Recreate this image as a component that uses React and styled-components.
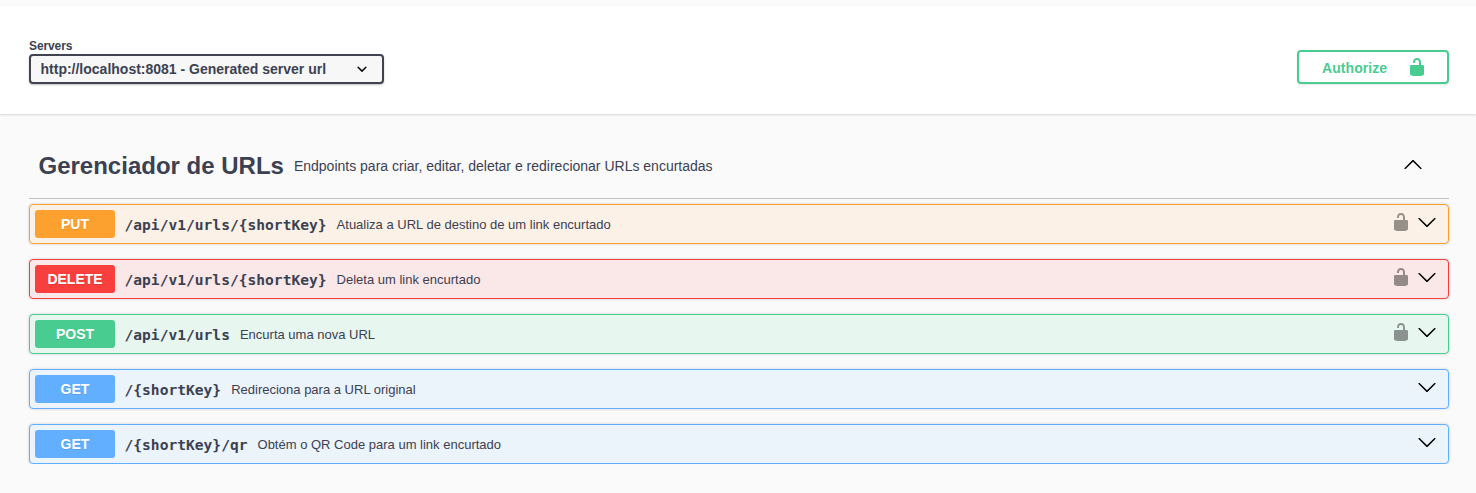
import React from 'react';
import styled, { createGlobalStyle } from 'styled-components';

const GlobalStyle = createGlobalStyle`
  *, *::before, *::after { box-sizing: border-box; }
  body {
    margin: 0;
    background: #fafafa;
    color: #3b4151;
    font-family: "Liberation Sans", Arial, sans-serif;
    overflow: hidden;
  }
`;

const Page = styled.div`
  padding-top: 6px;
`;

const SchemeContainer = styled.section`
  display: flex;
  justify-content: space-between;
  align-items: flex-start;
  height: 108px;
  padding: 32px 27px 0 29px;
  background: #fff;
  box-shadow: 0 1px 2px rgba(0, 0, 0, 0.15);
`;

const ServersLabel = styled.label`
  display: flex;
  flex-direction: column;
  font-size: 12px;
  font-weight: 700;
  line-height: 16px;
`;

const LabelText = styled.span`
  letter-spacing: -0.1px;
`;

const ServerSelect = styled.div`
  display: flex;
  align-items: center;
  justify-content: space-between;
  width: 355px;
  height: 30px;
  padding: 0 10px 0 9.5px;
  border: 2px solid #41444e;
  border-radius: 4px;
  background: #f7f7f7;
  box-shadow: 0 1px 2px rgba(0, 0, 0, 0.25);
  font-size: 14px;
`;

const AuthorizeButton = styled.button`
  display: flex;
  align-items: center;
  justify-content: space-between;
  width: 152px;
  height: 34px;
  margin-top: 12px;
  padding: 0 20px 0 23px;
  border: 2px solid #49cc90;
  border-radius: 4px;
  background: transparent;
  box-shadow: 0 1px 2px rgba(0, 0, 0, 0.1);
  color: #49cc90;
  font: 700 14px "Liberation Sans", Arial, sans-serif;
  letter-spacing: 0.07px;
`;

const ButtonText = styled.span`
  padding-top: 2px;
`;

const Icon = styled.svg`
  display: block;
  flex: none;
  width: 20px;
  height: 20px;
  fill: ${(p) => p.$fill || '#000'};
  opacity: ${(p) => p.$opacity || 1};
`;

const Section = styled.main`
  padding: 18px 27px 0 29px;
`;

const TagHeader = styled.header`
  display: flex;
  align-items: center;
  height: 67px;
  padding: 0 26px 0 9.5px;
  border-bottom: 1px solid rgba(59, 65, 81, 0.3);
`;

const TagTitle = styled.h3`
  margin: 0;
  padding-top: 2px;
  font-size: 24px;
  line-height: 28px;
  white-space: nowrap;
`;

const TagDescription = styled.small`
  flex: 1;
  padding: 2px 0 0 10px;
  font-size: 14px;
`;

const HeaderArrow = styled.span`
  padding-bottom: 3px;
`;

const Operations = styled.div`
  display: flex;
  flex-direction: column;
  gap: 15px;
  padding-top: 5px;
`;

const Operation = styled.div`
  display: flex;
  align-items: center;
  height: 40px;
  padding: 0 11px 0 5px;
  border: 1px solid ${(p) => p.$color};
  border-radius: 4px;
  background: ${(p) => p.$tint};
  box-shadow: 0 0 3px rgba(0, 0, 0, 0.19);
`;

const Method = styled.span`
  width: 80px;
  height: 28px;
  border-radius: 3px;
  background: ${(p) => p.$color};
  color: #fff;
  font-size: 14px;
  font-weight: 700;
  line-height: 28px;
  text-align: center;
  text-shadow: 0 1px 0 rgba(0, 0, 0, 0.1);
`;

const Path = styled.span`
  padding: 0 10px 0 9.5px;
  font-family: "DejaVu Sans Mono", monospace;
  font-size: 14.6px;
  font-weight: 700;
  white-space: nowrap;
`;

const Summary = styled.span`
  flex: 1;
  font-size: 13px;
`;

const Controls = styled.div`
  display: flex;
  gap: 6px;
  padding-bottom: 4px;
`;

const UnlockedIcon = (props) => (
  <Icon viewBox="0 0 20 20" {...props}>
    <path d="M15.8 8H14V5.6C14 2.703 12.665 1 10 1 7.334 1 6 2.703 6 5.6V6h2v-.801C8 3.754 8.797 3 10 3c1.203 0 2 .754 2 2.199V8H4c-.553 0-1 .646-1 1.199V17c0 .549.428 1.139.951 1.307l1.197.387C5.672 18.861 6.55 19 7.1 19h5.8c.549 0 1.428-.139 1.951-.307l1.196-.387c.524-.167.953-.757.953-1.306V9.199C17 8.646 16.352 8 15.8 8z" />
  </Icon>
);

const ArrowDown = () => (
  <Icon viewBox="0 0 20 20">
    <path d="M17.418 6.109c.272-.268.709-.268.979 0s.271.701 0 .969l-7.908 7.83c-.27.268-.707.268-.979 0l-7.908-7.83c-.27-.268-.27-.701 0-.969.271-.268.709-.268.979 0L10 13.25l7.418-7.141z" />
  </Icon>
);

const ArrowUp = () => (
  <Icon viewBox="0 0 20 20">
    <path d="M17.418 14.908c.272.268.709.268.979 0s.271-.701 0-.969l-7.908-7.83c-.27-.268-.707-.268-.979 0l-7.908 7.83c-.27.268-.27.701 0 .969.271.268.709.268.979 0L10 7.767l7.418 7.141z" />
  </Icon>
);

const SelectArrow = () => (
  <Icon viewBox="0 0 20 20">
    <path d="M13.418 7.859a.695.695 0 01.978 0 .68.68 0 010 .969l-3.908 3.83a.697.697 0 01-.979 0l-3.908-3.83a.68.68 0 010-.969.695.695 0 01.978 0L10 11l3.418-3.141z" />
  </Icon>
);

const METHODS = {
  PUT: { color: '#fca130', tint: '#fbf1e6' },
  DELETE: { color: '#f93e3e', tint: '#fae7e7' },
  POST: { color: '#49cc90', tint: '#e8f6f0' },
  GET: { color: '#61affe', tint: '#ebf3fb' },
};

const OPERATIONS = [
  { method: 'PUT', path: '/api/v1/urls/{shortKey}', summary: 'Atualiza a URL de destino de um link encurtado', secured: true },
  { method: 'DELETE', path: '/api/v1/urls/{shortKey}', summary: 'Deleta um link encurtado', secured: true },
  { method: 'POST', path: '/api/v1/urls', summary: 'Encurta uma nova URL', secured: true },
  { method: 'GET', path: '/{shortKey}', summary: 'Redireciona para a URL original' },
  { method: 'GET', path: '/{shortKey}/qr', summary: 'Obtém o QR Code para um link encurtado' },
];

export default function App() {
  return (
    <Page>
      <GlobalStyle />
      <SchemeContainer>
        <ServersLabel>
          <LabelText>Servers</LabelText>
          <ServerSelect>
            http://localhost:8081 - Generated server url
            <SelectArrow />
          </ServerSelect>
        </ServersLabel>
        <AuthorizeButton>
          <ButtonText>Authorize</ButtonText>
          <UnlockedIcon $fill="#49cc90" />
        </AuthorizeButton>
      </SchemeContainer>
      <Section>
        <TagHeader>
          <TagTitle>Gerenciador de URLs</TagTitle>
          <TagDescription>Endpoints para criar, editar, deletar e redirecionar URLs encurtadas</TagDescription>
          <HeaderArrow>
            <ArrowUp />
          </HeaderArrow>
        </TagHeader>
        <Operations>
          {OPERATIONS.map(({ method, path, summary, secured }) => (
            <Operation key={method + path} $color={METHODS[method].color} $tint={METHODS[method].tint}>
              <Method $color={METHODS[method].color}>{method}</Method>
              <Path>{path}</Path>
              <Summary>{summary}</Summary>
              <Controls>
                {secured && <UnlockedIcon $opacity={0.4} />}
                <ArrowDown />
              </Controls>
            </Operation>
          ))}
        </Operations>
      </Section>
    </Page>
  );
}
